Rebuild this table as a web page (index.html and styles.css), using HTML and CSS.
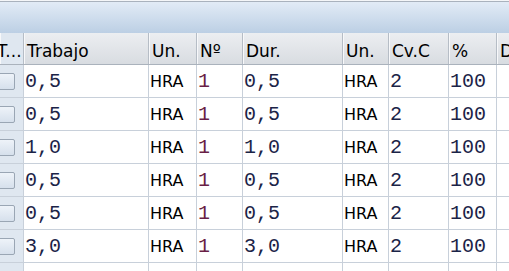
FILE: index.html
```html
<!DOCTYPE html>
<html lang="es">
<head>
  <meta charset="UTF-8" />
  <title>Operaciones</title>
  <link rel="stylesheet" href="styles.css">
</head>
<body>
  <div class="title-band"></div>

  <div class="grid">
    <div class="grid-row head">
      <div class="cell sel">T...</div>
      <div class="cell">Trabajo</div>
      <div class="cell">Un.</div>
      <div class="cell">Nº</div>
      <div class="cell">Dur.</div>
      <div class="cell">Un.</div>
      <div class="cell">Cv.C</div>
      <div class="cell">%</div>
      <div class="cell">D</div>
    </div>

    <div class="grid-row">
      <div class="cell sel"><span class="check"></span></div>
      <div class="cell num">0,5</div>
      <div class="cell unit">HRA</div>
      <div class="cell num count">1</div>
      <div class="cell num">0,5</div>
      <div class="cell unit">HRA</div>
      <div class="cell num">2</div>
      <div class="cell num">100</div>
      <div class="cell"></div>
    </div>

    <div class="grid-row">
      <div class="cell sel"><span class="check"></span></div>
      <div class="cell num">0,5</div>
      <div class="cell unit">HRA</div>
      <div class="cell num count">1</div>
      <div class="cell num">0,5</div>
      <div class="cell unit">HRA</div>
      <div class="cell num">2</div>
      <div class="cell num">100</div>
      <div class="cell"></div>
    </div>

    <div class="grid-row">
      <div class="cell sel"><span class="check"></span></div>
      <div class="cell num">1,0</div>
      <div class="cell unit">HRA</div>
      <div class="cell num count">1</div>
      <div class="cell num">1,0</div>
      <div class="cell unit">HRA</div>
      <div class="cell num">2</div>
      <div class="cell num">100</div>
      <div class="cell"></div>
    </div>

    <div class="grid-row">
      <div class="cell sel"><span class="check"></span></div>
      <div class="cell num">0,5</div>
      <div class="cell unit">HRA</div>
      <div class="cell num count">1</div>
      <div class="cell num">0,5</div>
      <div class="cell unit">HRA</div>
      <div class="cell num">2</div>
      <div class="cell num">100</div>
      <div class="cell"></div>
    </div>

    <div class="grid-row">
      <div class="cell sel"><span class="check"></span></div>
      <div class="cell num">0,5</div>
      <div class="cell unit">HRA</div>
      <div class="cell num count">1</div>
      <div class="cell num">0,5</div>
      <div class="cell unit">HRA</div>
      <div class="cell num">2</div>
      <div class="cell num">100</div>
      <div class="cell"></div>
    </div>

    <div class="grid-row">
      <div class="cell sel"><span class="check"></span></div>
      <div class="cell num">3,0</div>
      <div class="cell unit">HRA</div>
      <div class="cell num count">1</div>
      <div class="cell num">3,0</div>
      <div class="cell unit">HRA</div>
      <div class="cell num">2</div>
      <div class="cell num">100</div>
      <div class="cell"></div>
    </div>

    <div class="grid-row">
      <div class="cell sel"><span class="check"></span></div>
      <div class="cell"></div>
      <div class="cell"></div>
      <div class="cell"></div>
      <div class="cell"></div>
      <div class="cell"></div>
      <div class="cell"></div>
      <div class="cell"></div>
      <div class="cell"></div>
    </div>
  </div>
</body>
</html>
```

FILE: styles.css
```css
body {
  font-family: "DejaVu Sans", Verdana, sans-serif;
  font-size: 16px;
  color: #000;
  background-color: #fff;
  margin: 0;
  width: 509px;
  height: 271px;
  overflow: hidden;
}

.title-band {
  height: 33px;
  background: linear-gradient(#e4edf7, #bccfe4);
  box-shadow: inset 0 1px 0 #f4f6f8, inset 0 2px 0 #a9b2bd;
}

.grid {
  width: 560px;
}

.grid-row {
  display: grid;
  grid-template-columns: 24px 125px 48px 46px 100px 46px 60px 48px 115px;
  height: 32px;
  border-bottom: 1px solid #c8d0da;
}

.cell {
  box-sizing: border-box;
  border-right: 1px solid #c8d0da;
  padding-left: 1px;
  display: flex;
  align-items: center;
  white-space: nowrap;
  overflow: hidden;
}

.head {
  height: 31px;
  font-size: 17px;
  background: linear-gradient(#eceef1, #d8dce1);
  border-bottom: 1px solid #aab2bc;
}

.head .cell {
  border-right-color: #b6bdc6;
  box-shadow: inset 1px 0 0 #f7f8fa;
  padding-left: 3px;
  padding-top: 5px;
}

.head .sel {
  padding-left: 0;
  text-indent: -3px;
}

.sel {
  background-color: #dfe7f0;
}

.grid-row .sel {
  padding-left: 0;
}

.check {
  display: block;
  width: 17px;
  height: 17px;
  margin-left: -2px;
  box-sizing: border-box;
  border: 1px solid #9aa6b4;
  border-radius: 2px;
  background: linear-gradient(#eef3f9, #d6e0ec);
}

.num {
  font-family: "Liberation Mono", "Courier New", monospace;
  font-size: 20px;
  color: #1b2347;
}

.count {
  color: #6a1f46;
}

.unit {
  color: #000;
}
```
